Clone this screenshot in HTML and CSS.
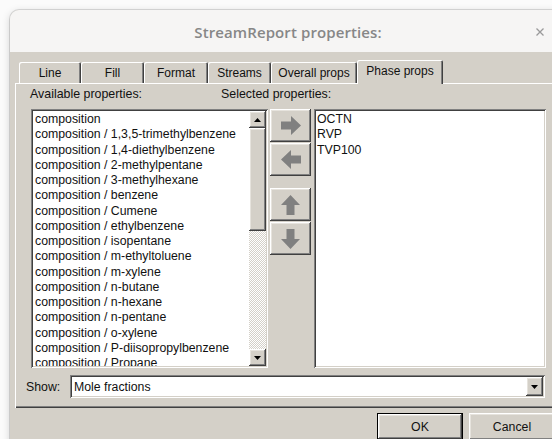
FILE: index.html
```html
<!DOCTYPE html>
<html lang="en">
<head>
<meta charset="utf-8">
<title>StreamReport properties</title>
<link rel="stylesheet" href="styles.css">
</head>
<body>
<div class="window">
  <header class="titlebar">
    <span class="spacer"></span>
    <h1 class="title">StreamReport properties:</h1>
    <span class="close" aria-label="Close">
      <svg width="8" height="8" viewBox="0 0 8 8"><path d="M0.5 0.5 L7.5 7.5 M7.5 0.5 L0.5 7.5" stroke="#9a9a9a" stroke-width="1.3" fill="none"/></svg>
    </span>
  </header>

  <div class="client">
    <nav class="tabs">
      <div class="tab w62">Line</div>
      <div class="tab w63">Fill</div>
      <div class="tab w64">Format</div>
      <div class="tab w63">Streams</div>
      <div class="tab w86">Overall props</div>
      <div class="tab w86 active">Phase props</div>
    </nav>

    <section class="page">
      <div class="labels">
        <span>Available properties:</span>
        <span>Selected properties:</span>
      </div>

      <div class="lists">
        <div class="listbox available">
          <ul class="items">
            <li>composition</li>
            <li>composition / 1,3,5-trimethylbenzene</li>
            <li>composition / 1,4-diethylbenzene</li>
            <li>composition / 2-methylpentane</li>
            <li>composition / 3-methylhexane</li>
            <li>composition / benzene</li>
            <li>composition / Cumene</li>
            <li>composition / ethylbenzene</li>
            <li>composition / isopentane</li>
            <li>composition / m-ethyltoluene</li>
            <li>composition / m-xylene</li>
            <li>composition / n-butane</li>
            <li>composition / n-hexane</li>
            <li>composition / n-pentane</li>
            <li>composition / o-xylene</li>
            <li>composition / P-diisopropylbenzene</li>
            <li>composition / Propane</li>
          </ul>
          <div class="scrollbar">
            <div class="sb-btn raised">
              <svg width="7" height="4" viewBox="0 0 7 4"><polygon points="3.5,0 7,4 0,4" fill="#000"/></svg>
            </div>
            <div class="sb-thumb raised"></div>
            <div class="sb-track"></div>
            <div class="sb-btn raised">
              <svg width="7" height="4" viewBox="0 0 7 4"><polygon points="0,0 7,0 3.5,4" fill="#000"/></svg>
            </div>
          </div>
        </div>

        <div class="movers">
          <div class="mover raised">
            <svg width="20" height="19" viewBox="0 0 20 19"><polygon points="0,5.5 10,5.5 10,0 20,9.5 10,19 10,13.5 0,13.5" fill="#808080"/></svg>
          </div>
          <div class="mover raised">
            <svg width="20" height="19" viewBox="0 0 20 19"><polygon points="20,5.5 10,5.5 10,0 0,9.5 10,19 10,13.5 20,13.5" fill="#808080"/></svg>
          </div>
          <div class="mover raised second-group">
            <svg width="19" height="20" viewBox="0 0 19 20"><polygon points="5.5,20 5.5,10 0,10 9.5,0 19,10 13.5,10 13.5,20" fill="#808080"/></svg>
          </div>
          <div class="mover raised">
            <svg width="19" height="20" viewBox="0 0 19 20"><polygon points="5.5,0 5.5,10 0,10 9.5,20 19,10 13.5,10 13.5,0" fill="#808080"/></svg>
          </div>
        </div>

        <div class="listbox selected">
          <ul class="items">
            <li>OCTN</li>
            <li>RVP</li>
            <li>TVP100</li>
          </ul>
        </div>
      </div>

      <div class="show-row">
        <label class="show-label">Show:</label>
        <div class="combo">
          <span class="combo-value">Mole fractions</span>
          <div class="combo-drop raised">
            <svg width="7" height="4" viewBox="0 0 7 4"><polygon points="0,0 7,0 3.5,4" fill="#000"/></svg>
          </div>
        </div>
      </div>
    </section>

    <footer class="footer">
      <button class="btn default">OK</button>
      <button class="btn">Cancel</button>
    </footer>
  </div>
</div>
</body>
</html>
```

FILE: styles.css
```css
* {
  box-sizing: border-box;
}

html, body {
  margin: 0;
  padding: 0;
  height: 100%;
  overflow: hidden;
  background: #fbfbfb;
}

body {
  font-family: "Liberation Sans", Arial, sans-serif;
  color: #111;
}

/* dialog window */
.window {
  margin: 10px 0 0 10px;
  width: 556px;
  height: 470px;
  border-radius: 9px 9px 0 0;
  overflow: hidden;
  background: #d4d0c8;
  box-shadow: 0 0 0 1px rgba(0, 0, 0, 0.12), 0 2px 8px rgba(0, 0, 0, 0.18);
}

.titlebar {
  height: 42px;
  background: #f6f5f4;
  display: grid;
  grid-template-columns: 1fr auto 1fr;
  align-items: center;
}

.title {
  margin: 0;
  padding-top: 2px;
  font-family: "Open Sans", "Noto Sans", sans-serif;
  font-weight: 600;
  font-size: 15px;
  color: #878787;
  letter-spacing: 0.1px;
}

.close {
  justify-self: end;
  margin-right: 22px;
  display: flex;
  align-items: center;
  justify-content: center;
  width: 8px;
  height: 8px;
  margin-top: 2px;
}

.close svg {
  display: block;
}

.client {
  padding: 8px 0 0 5px;
}

/* classic 3D edges */
.raised {
  background: #d4d0c8;
  box-shadow: inset -1px -1px #404040, inset 1px 1px #ffffff,
    inset -2px -2px #808080, inset 2px 2px #e6e3dd;
}

/* tab strip */
.tabs {
  display: flex;
  align-items: flex-end;
  height: 23px;
  margin-left: 4px;
  position: relative;
  z-index: 1;
}

.tab {
  height: 21px;
  display: flex;
  align-items: center;
  justify-content: center;
  font-size: 12px;
  padding-top: 1px;
  background: #d4d0c8;
  border-radius: 2px 2px 0 0;
  box-shadow: inset 1px 1px #ffffff, inset -1px 0 #404040, inset -2px 0 #808080;
}

.tab.active {
  height: 24px;
  margin-bottom: -1px;
  padding-bottom: 3px;
}

.w62 { width: 62px; }
.w63 { width: 63px; }
.w64 { width: 64px; }
.w86 { width: 86px; }

/* tab page */
.page {
  height: 325px;
  padding: 5px 0 0 16px;
  box-shadow: inset 1px 1px #ffffff, inset -1px -1px #404040, inset -2px -2px #808080;
}

.labels {
  display: grid;
  grid-template-columns: 191px auto;
  height: 12px;
  font-size: 12.4px;
  line-height: 12px;
  margin-left: -1px;
}

.lists {
  display: flex;
  margin-top: 9px;
  height: 259px;
}

.listbox {
  background: #ffffff;
  padding: 2px;
  box-shadow: inset 1px 1px #808080, inset -1px -1px #ffffff,
    inset 2px 2px #404040, inset -2px -2px #d4d0c8;
  overflow: hidden;
}

.listbox.available {
  width: 237px;
  display: grid;
  grid-template-columns: 1fr 17px;
}

.listbox.selected {
  width: 232px;
  margin-left: 3px;
}

.items {
  list-style: none;
  margin: 0;
  padding: 1px 0 0 2px;
  font-size: 12.3px;
  line-height: 15.25px;
  overflow: hidden;
  white-space: nowrap;
}

.selected .items {
  padding-left: 1px;
}

.scrollbar {
  display: flex;
  flex-direction: column;
  min-height: 0;
}

.sb-btn {
  height: 17px;
  flex: none;
  display: flex;
  align-items: center;
  justify-content: center;
}

.sb-btn svg {
  display: block;
}

.sb-thumb {
  height: 103px;
  flex: none;
}

.sb-track {
  flex: 1;
  background-color: #ffffff;
  background-image: repeating-conic-gradient(#d4d0c8 0 25%, #ffffff 0 50%);
  background-size: 2px 2px;
}

/* move buttons between the lists */
.movers {
  width: 41px;
  margin-left: 2px;
  display: flex;
  flex-direction: column;
  gap: 1px;
}

.mover {
  height: 33px;
  display: flex;
  align-items: center;
  justify-content: center;
}

.mover svg {
  display: block;
}

.mover.second-group {
  margin-top: 11px;
}

/* "Show" selector */
.show-row {
  display: flex;
  align-items: center;
  margin: 7px 0 0 -5px;
  height: 23px;
}

.show-label {
  width: 44px;
  font-size: 12.3px;
}

.combo {
  width: 475px;
  height: 23px;
  background: #ffffff;
  display: flex;
  align-items: center;
  padding: 2px;
  box-shadow: inset 1px 1px #808080, inset -1px -1px #ffffff,
    inset 2px 2px #404040, inset -2px -2px #d4d0c8;
}

.combo-value {
  flex: 1;
  font-size: 12.3px;
  padding-left: 2px;
}

.combo-drop {
  width: 17px;
  height: 19px;
  display: flex;
  align-items: center;
  justify-content: center;
}

.combo-drop svg {
  display: block;
}

/* dialog buttons */
.footer {
  display: flex;
  justify-content: flex-end;
  gap: 6px;
  padding-right: 11px;
  margin-top: 5px;
}

.btn {
  width: 86px;
  height: 27px;
  border: none;
  padding: 0;
  font-family: "Liberation Sans", Arial, sans-serif;
  font-size: 12.3px;
  color: #111;
  background: #d4d0c8;
  box-shadow: inset -1px -1px #404040, inset 1px 1px #ffffff,
    inset -2px -2px #808080, inset 2px 2px #e6e3dd;
}

.btn.default {
  box-shadow: inset 0 0 0 1px #000000, inset -2px -2px #404040, inset 2px 2px #ffffff,
    inset -3px -3px #808080, inset 3px 3px #e6e3dd;
}
```
